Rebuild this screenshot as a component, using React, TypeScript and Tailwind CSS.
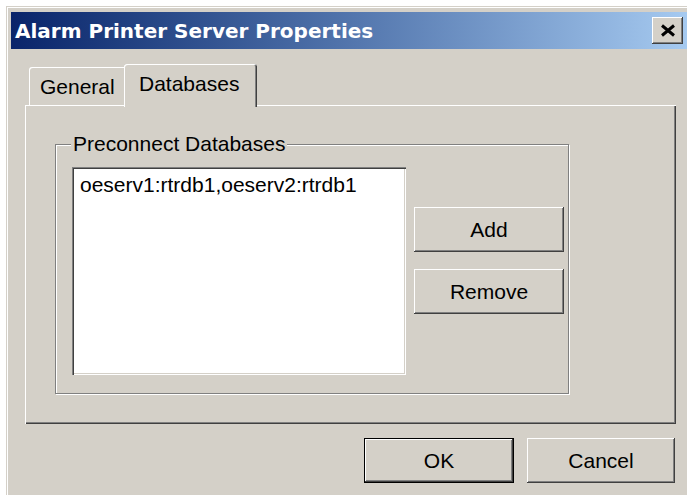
import React from 'react';

const raised = 'shadow-[inset_-1px_-1px_#404040,inset_1px_1px_#ffffff,inset_-2px_-2px_#808080,inset_2px_2px_#d4d0c8]';
const sunken = 'shadow-[inset_1px_1px_#808080,inset_2px_2px_#404040,inset_-1px_-1px_#ffffff,inset_-2px_-2px_#d4d0c8]';

const Button: React.FC<{ label: string; width: string; isDefault?: boolean }> = ({ label, width, isDefault }) => (
    <div className={`${width} h-[45px] ${isDefault ? 'border border-black' : ''}`}>
        <button
            className={`w-full h-full flex items-center justify-center bg-[#d4d0c8] text-black text-[21px] leading-[24px] ${raised}`}
        >
            {label}
        </button>
    </div>
);

export default function App() {
    return (
        <div className="w-[687px] h-[495px] overflow-hidden bg-white pl-[6px] pt-[6px] font-['Liberation_Sans',Arial,sans-serif]">
            {/* Dialog frame */}
            <div className="h-full border-l border-t border-[#d4d0c8]">
                <div className="h-full border-l border-t border-white bg-[#d4d0c8] pl-[3px] pt-[4px]">
                    {/* Title bar */}
                    <div className="h-[37px] flex items-center justify-between bg-gradient-to-r from-[#0a246a] to-[#a6caf0] pl-[4px] pr-[4px]">
                        <span className="text-white font-bold text-[20px] leading-none font-['DejaVu_Sans',sans-serif]">
                            Alarm Printer Server Properties
                        </span>
                        <button className={`w-[31px] h-[27px] bg-[#d4d0c8] flex items-center justify-center ${raised}`}>
                            <svg width="16" height="13" viewBox="0 0 16 13">
                                <path d="M2 1.5 L14 11.5 M14 1.5 L2 11.5" stroke="#000" strokeWidth="3" />
                            </svg>
                        </button>
                    </div>

                    <div className="pl-[14px] pt-[15px]">
                        {/* Tabs */}
                        <div className="flex items-end h-[41px] pl-[4px]">
                            <div className="w-[95px] h-[38px] rounded-tl-[3px] pl-[11px] pt-[8px] text-[21px] leading-[24px] text-black shadow-[inset_1px_1px_#ffffff]">
                                General
                            </div>
                            <div className="relative z-10 w-[133px] h-[43px] -mb-[2px] rounded-t-[3px] bg-[#d4d0c8] pl-[15px] pt-[8px] text-[21px] leading-[24px] text-black shadow-[inset_1px_1px_#ffffff,inset_-1px_0_#404040,inset_-2px_0_#808080]">
                                Databases
                            </div>
                        </div>

                        {/* Tab panel */}
                        <div className="w-[651px] h-[319px] pl-[30px] pt-[27px] shadow-[inset_1px_1px_#ffffff,inset_-1px_-1px_#404040,inset_-2px_-2px_#808080]">
                            <fieldset className="w-[514px] border border-[#808080] pl-[16px] pt-[11px] pb-[18px] shadow-[inset_1px_1px_#ffffff,1px_1px_#ffffff]">
                                <legend className="-ml-[1px] px-[2px] bg-[#d4d0c8] text-[21px] leading-[24px] text-black">
                                    Preconnect Databases
                                </legend>
                                <div className="flex gap-[8px]">
                                    <div className={`w-[334px] h-[208px] bg-white pl-[8px] pt-[6px] text-[21px] leading-[24px] text-black ${sunken}`}>
                                        oeserv1:rtrdb1,oeserv2:rtrdb1
                                    </div>
                                    <div className="flex flex-col gap-[17px] pt-[40px]">
                                        <Button label="Add" width="w-[150px]" />
                                        <Button label="Remove" width="w-[150px]" />
                                    </div>
                                </div>
                            </fieldset>
                        </div>

                        {/* Dialog buttons */}
                        <div className="w-[651px] flex justify-end gap-[13px] pt-[14px] pr-[1px]">
                            <Button label="OK" width="w-[150px]" isDefault />
                            <Button label="Cancel" width="w-[148px]" />
                        </div>
                    </div>
                </div>
            </div>
        </div>
    );
}
